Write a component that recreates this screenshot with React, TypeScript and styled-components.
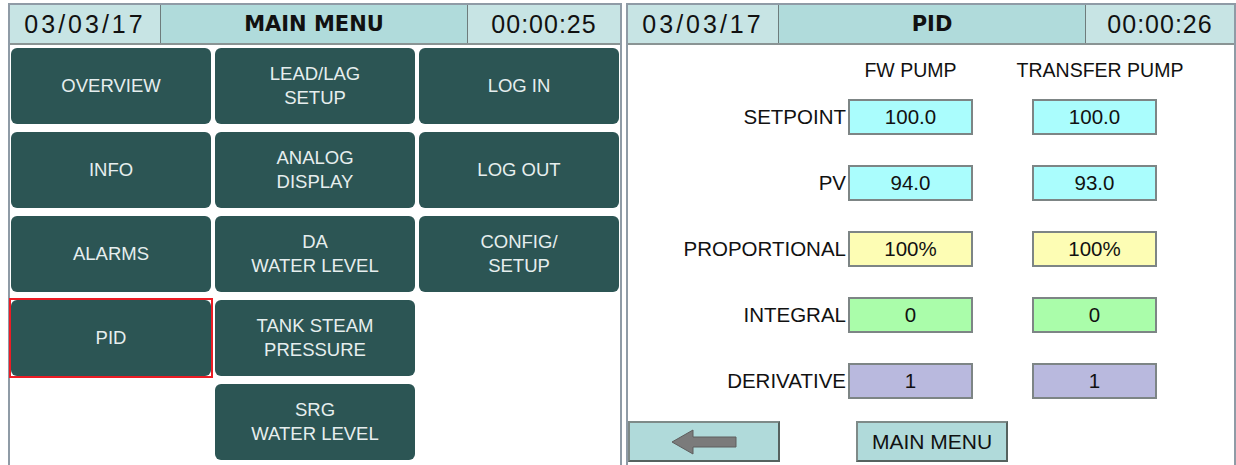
import React from "react";
import styled, { createGlobalStyle } from "styled-components";

const GlobalStyle = createGlobalStyle`
	html, body {
		margin: 0;
		padding: 0;
		background: #ffffff;
		font-family: "Liberation Sans", Arial, sans-serif;
	}
	body {
		padding: 3px 0 0 8px;
		height: 465px;
		box-sizing: border-box;
		overflow: hidden;
	}
`;

const Screen = styled.div`
	display: flex;
	flex-flow: row nowrap;
	gap: 4px;
	height: 462px;
`;

const Panel = styled.div<{ $width: number }>`
	width: ${(p) => p.$width}px;
	box-sizing: border-box;
	border: 2px solid #8f9ba6;
	border-bottom: none;
	display: flex;
	flex-flow: column nowrap;
`;

//header bar
const Header = styled.div`
	display: grid;
	grid-template-columns: 150px 308px 1fr;
	height: 38px;
	border-bottom: 2px solid #8a9494;
`;
const HeaderCell = styled.div<{ $title?: boolean; $spacing?: number }>`
	display: flex;
	align-items: center;
	justify-content: center;
	background: ${(p) => (p.$title ? "#b0dbdb" : "#c7e4e4")};
	border-left: ${(p) => (p.$title ? "1px solid #6e7c7c" : "none")};
	border-right: ${(p) => (p.$title ? "1px solid #6e7c7c" : "none")};
	color: #111;
	font-family: ${(p) =>
		p.$title ? '"DejaVu Sans", Verdana, sans-serif' : '"Liberation Sans", Arial, sans-serif'};
	font-weight: ${(p) => (p.$title ? 700 : 400)};
	font-size: ${(p) => (p.$title ? "21px" : "25px")};
	letter-spacing: ${(p) => p.$spacing ?? 0}px;
`;

//main menu
const MenuGrid = styled.div`
	display: grid;
	grid-template-columns: 200px 200px 200px;
	grid-auto-rows: 76px;
	column-gap: 4px;
	row-gap: 8px;
	padding: 3px 0 0 1px;
`;
const MenuButton = styled.div<{ $selected?: boolean; $col?: number }>`
	position: relative;
	grid-column: ${(p) => p.$col ?? "auto"};
	display: flex;
	align-items: center;
	justify-content: center;
	text-align: center;
	background: #2c5554;
	border-radius: 6px;
	color: #e6eeee;
	font-size: 18.5px;
	line-height: 24px;
	&::after {
		content: "";
		display: ${(p) => (p.$selected ? "block" : "none")};
		position: absolute;
		inset: -2px;
		border: 2px solid #ec1c24;
	}
`;

//pid page
const PidBody = styled.div`
	display: flex;
	flex-flow: column nowrap;
`;
const Row = styled.div<{ $top: number }>`
	display: flex;
	flex-flow: row nowrap;
	align-items: center;
	margin-top: ${(p) => p.$top}px;
`;
const ColHead = styled.div<{ $width: number; $left: number }>`
	width: ${(p) => p.$width}px;
	margin-left: ${(p) => p.$left}px;
	text-align: center;
	font-size: 19.5px;
	line-height: 22px;
	color: #111;
`;
const Label = styled.div`
	width: 220px;
	box-sizing: border-box;
	padding-right: 2px;
	text-align: right;
	font-size: 20.5px;
	color: #111;
`;
const ValueBox = styled.div<{ $bg: string; $left?: number }>`
	width: 125px;
	height: 36px;
	box-sizing: border-box;
	margin-left: ${(p) => p.$left ?? 0}px;
	display: flex;
	align-items: center;
	justify-content: center;
	background: ${(p) => p.$bg};
	border: 2px solid #7d8585;
	font-size: 20.5px;
	color: #111;
`;
const NavButton = styled.div<{ $width: number; $left: number }>`
	width: ${(p) => p.$width}px;
	height: 41px;
	box-sizing: border-box;
	margin-left: ${(p) => p.$left}px;
	display: flex;
	align-items: center;
	justify-content: center;
	background: #b0dada;
	border: 2px solid #56625f;
	border-top-color: #7e8a88;
	border-left-color: #7e8a88;
	font-size: 21px;
	color: #111;
`;

const menuItems: { label: string[]; selected?: boolean; col?: number }[] = [
	{ label: ["OVERVIEW"] },
	{ label: ["LEAD/LAG", "SETUP"] },
	{ label: ["LOG IN"] },
	{ label: ["INFO"] },
	{ label: ["ANALOG", "DISPLAY"] },
	{ label: ["LOG OUT"] },
	{ label: ["ALARMS"] },
	{ label: ["DA", "WATER LEVEL"] },
	{ label: ["CONFIG/", "SETUP"] },
	{ label: ["PID"], selected: true },
	{ label: ["TANK STEAM", "PRESSURE"] },
	{ label: ["SRG", "WATER LEVEL"], col: 2 },
];

const pidRows = [
	{ name: "SETPOINT", fw: "100.0", tr: "100.0", bg: "#aafdfd" },
	{ name: "PV", fw: "94.0", tr: "93.0", bg: "#aafdfd" },
	{ name: "PROPORTIONAL", fw: "100%", tr: "100%", bg: "#fdfdb4" },
	{ name: "INTEGRAL", fw: "0", tr: "0", bg: "#aafdaa" },
	{ name: "DERIVATIVE", fw: "1", tr: "1", bg: "#b9b9de" },
];

function BackArrow() {
	return (
		<svg width="66" height="26" viewBox="0 0 66 26">
			<polygon
				points="1,13 22,1 22,8 65,8 65,18 22,18 22,25"
				fill="#7b7b7b"
				stroke="#5e5e5e"
				strokeWidth="1"
			/>
		</svg>
	);
}

function App() {
	return (
		<>
			<GlobalStyle />
			<Screen>
				<Panel $width={614}>
					<Header>
						<HeaderCell $spacing={3}>03/03/17</HeaderCell>
						<HeaderCell $title>MAIN MENU</HeaderCell>
						<HeaderCell $spacing={1}>00:00:25</HeaderCell>
					</Header>
					<MenuGrid>
						{menuItems.map((item, i) => (
							<MenuButton key={i} $selected={item.selected} $col={item.col}>
								<div>
									{item.label.map((line, j) => (
										<div key={j}>{line}</div>
									))}
								</div>
							</MenuButton>
						))}
					</MenuGrid>
				</Panel>
				<Panel $width={610}>
					<Header>
						<HeaderCell $spacing={3}>03/03/17</HeaderCell>
						<HeaderCell $title>PID</HeaderCell>
						<HeaderCell $spacing={1}>00:00:26</HeaderCell>
					</Header>
					<PidBody>
						<Row $top={14}>
							<ColHead $width={125} $left={220}>FW PUMP</ColHead>
							<ColHead $width={170} $left={42}>TRANSFER PUMP</ColHead>
						</Row>
						{pidRows.map((r, i) => (
							<Row key={r.name} $top={i === 0 ? 18 : 30}>
								<Label>{r.name}</Label>
								<ValueBox $bg={r.bg}>{r.fw}</ValueBox>
								<ValueBox $bg={r.bg} $left={59}>
									{r.tr}
								</ValueBox>
							</Row>
						))}
						<Row $top={22}>
							<NavButton $width={152} $left={0}>
								<BackArrow />
							</NavButton>
							<NavButton $width={152} $left={76}>
								MAIN MENU
							</NavButton>
						</Row>
					</PidBody>
				</Panel>
			</Screen>
		</>
	);
}

export default App;
